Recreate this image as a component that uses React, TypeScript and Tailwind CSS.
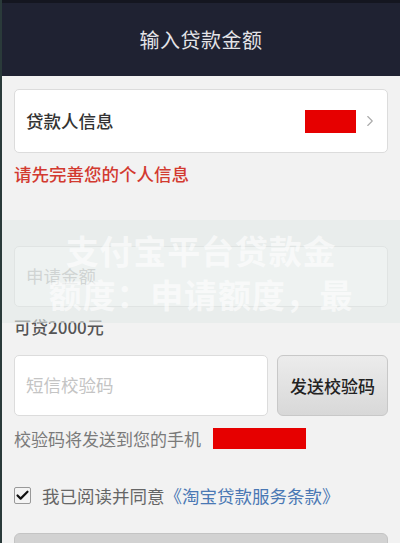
import { Check, ChevronRight } from "lucide-react";

const font = { fontFamily: '"Noto Sans CJK SC", "Noto Sans", sans-serif' };

export default function App() {
  return (
    <div
      className="relative w-[400px] h-[543px] overflow-hidden bg-[#f2f2f2] border-l-2 border-[#2a3a3a]"
      style={font}
    >
      {/* header */}
      <div className="h-[76px] bg-[#1f2232] border-t-[3px] border-[#141620] flex items-center justify-center">
        <span className="text-[20px] text-[#e4e4e8] tracking-wide">输入贷款金额</span>
      </div>

      <div className="px-[12px] pt-[13px]">
        {/* borrower info */}
        <div className="h-[64px] bg-white border border-[#dcdcdc] rounded-[5px] flex items-center pl-[11px] pr-[8px]">
          <span className="text-[17.5px] font-medium text-[#333]">贷款人信息</span>
          <div className="ml-auto w-[51px] h-[23px] bg-[#e60000]" />
          <ChevronRight className="w-[18px] h-[18px] ml-[5px] text-[#aaa]" strokeWidth={1.5} />
        </div>
        <p className="mt-[10px] text-[17.5px] font-medium leading-[22px] text-[#d23a30]">请先完善您的个人信息</p>

        {/* amount */}
        <div className="mt-[61px] h-[61px] bg-white border border-[#dcdcdc] rounded-[5px] flex items-center pl-[11px]">
          <span className="text-[17.5px] text-[#b4b4b4]">申请金额</span>
        </div>
        <p className="mt-[9px] text-[17px] font-medium leading-[22px] text-[#555]">可贷2000元</p>

        {/* sms code */}
        <div className="mt-[17px] flex gap-[9px]">
          <div className="flex-1 h-[61px] bg-white border border-[#dcdcdc] rounded-[5px] flex items-center pl-[11px]">
            <span className="text-[17.5px] text-[#c4c4c4]">短信校验码</span>
          </div>
          <div className="w-[111px] h-[61px] rounded-[6px] border border-[#c8c8c8] bg-gradient-to-b from-[#ececec] to-[#d8d8d8] flex items-center justify-center">
            <span className="text-[17px] font-medium text-[#222]">发送校验码</span>
          </div>
        </div>
        <div className="mt-[10px] flex items-center">
          <span className="text-[17px] text-[#7a7a7a]">校验码将发送到您的手机</span>
          <div className="ml-[12px] w-[93px] h-[21px] bg-[#e60000]" />
        </div>

        {/* agree */}
        <div className="mt-[31px] flex items-center">
          <div className="w-[17px] h-[17px] border border-[#999] rounded-[2px] bg-[#f4f4f4] flex items-center justify-center">
            <Check className="w-[15px] h-[15px] text-[#111]" strokeWidth={3.5} />
          </div>
          <span className="ml-[11px] text-[17.5px] text-[#666]">我已阅读并同意</span>
          <span className="text-[17.5px] text-[#4a78b4]">《淘宝贷款服务条款》</span>
        </div>

        <div className="mt-[24px] h-[40px] rounded-[6px] bg-[#d2d2d2] border border-[#c4c4c4]" />
      </div>

      {/* watermark band */}
      <div className="absolute left-0 right-0 top-[220px] h-[103px] bg-[#e2eae8]/60 flex flex-col items-center justify-center pointer-events-none">
        <span className="text-[33px] leading-[44px] font-bold text-white/60 tracking-wide">支付宝平台贷款金</span>
        <span className="text-[33px] leading-[44px] font-bold text-white/60 tracking-wide">额度：申请额度，最</span>
      </div>
    </div>
  );
}
